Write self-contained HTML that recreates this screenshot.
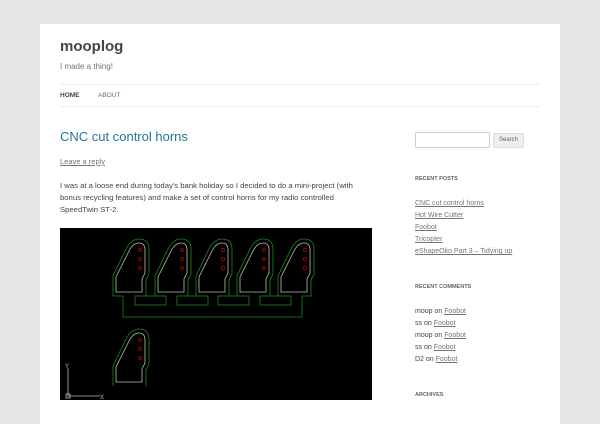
<!DOCTYPE html>
<html><head><style>
body{margin:0;background:#e6e6e6;font-family:"Liberation Sans","DejaVu Sans",sans-serif;width:600px;height:400px;overflow:hidden}
.page{position:absolute;left:40px;top:24px;width:520px;height:400px;background:#fff}
a{color:#757575;text-decoration:underline}
.s{position:absolute;white-space:nowrap}
</style></head><body>
<div class="page"></div>
<div class="s" style="left:60px;top:38px;font-size:15px;font-weight:bold;color:#444">mooplog</div>
<div class="s" style="left:60px;top:62px;font-size:8px;color:#757575">I made a thing!</div>
<div style="position:absolute;left:60px;top:84px;width:480px;border-top:1px solid #ededed"></div>
<div class="s" style="left:60px;top:92px;font-size:6.5px;font-weight:bold;color:#444">HOME</div>
<div class="s" style="left:98px;top:92px;font-size:6.5px;color:#6a6a6a">ABOUT</div>
<div style="position:absolute;left:60px;top:106px;width:480px;border-top:1px solid #ededed"></div>
<div class="s" style="left:60px;top:129px;font-size:13px;color:#21759b">CNC cut control horns</div>
<div class="s" style="left:60px;top:157px;font-size:7.5px"><a>Leave a reply</a></div>
<div class="s" style="left:60px;top:180px;font-size:7.7px;line-height:12px;color:#444">I was at a loose end during today's bank holiday so I decided to do a mini-project (with<br>bonus recycling features) and make a set of control horns for my radio controlled<br>SpeedTwin ST-2.</div>
<svg style="position:absolute;left:60px;top:228px" width="312" height="172" viewBox="0 0 312 172">
<rect width="312" height="172" fill="#000"/>
<defs>
<g id="h">
<path d="M0 49 L0 34 L13 8 Q17 0 23 0 Q29 0 29 7 L29 30 L26 36 L26 49 Z" fill="none" stroke="#bbb" stroke-width="0.8"/>
<path d="M-3 53 L-3 33 L10 6 Q15 -4 23 -4 Q33 -4 33 6 L33 31 L30 37 L30 53" fill="none" stroke="#1a8a1a" stroke-width="0.8"/>
<circle cx="24" cy="7" r="1.5" fill="none" stroke="#c00" stroke-width="0.8"/><circle cx="24" cy="16" r="1.5" fill="none" stroke="#c00" stroke-width="0.8"/><circle cx="24" cy="25" r="1.5" fill="none" stroke="#c00" stroke-width="0.8"/>
</g>
</defs>
<use href="#h" x="56" y="15"/><use href="#h" x="98" y="15"/><use href="#h" x="139" y="15"/><use href="#h" x="180" y="15"/><use href="#h" x="221" y="15"/>
<g fill="none" stroke="#1a8a1a" stroke-width="0.8">
<path d="M53 68 L63 68 L63 89 L242 89 L242 68 L252 68"/>
<rect x="75" y="68" width="31" height="9"/><rect x="117" y="68" width="31" height="9"/><rect x="158" y="68" width="31" height="9"/><rect x="200" y="68" width="31" height="9"/>
</g>
<use href="#h" x="56" y="105"/>
<g stroke="#bbb" stroke-width="0.8" fill="none"><path d="M8 140 L8 168 L40 168"/><rect x="6" y="166" width="4" height="4"/></g>
<text x="5" y="140" fill="#bbb" font-size="6">Y</text><text x="40" y="171" fill="#bbb" font-size="6">X</text>
</svg>
<div style="position:absolute;left:415px;top:132px;width:73px;height:14px;border:1px solid #ccc;border-radius:2px"></div>
<div class="s" style="left:493px;top:133px;width:29px;height:13px;background:#eee;border:1px solid #ddd;border-radius:2px;font-size:6px;color:#666;text-align:center;line-height:13px">Search</div>
<div class="s" style="left:415px;top:176px;font-size:5.5px;font-weight:bold;color:#636363">RECENT POSTS</div>
<div class="s" style="left:415px;top:198px;font-size:7px;line-height:12px;color:#757575"><a>CNC cut control horns</a><br><a>Hot Wire Cutter</a><br><a>Foobot</a><br><a>Tricopter</a><br><a>eShapeOko Part 3 – Tidying up</a></div>
<div class="s" style="left:415px;top:284px;font-size:5.5px;font-weight:bold;color:#636363">RECENT COMMENTS</div>
<div class="s" style="left:415px;top:306px;font-size:7px;line-height:12px;color:#444">moop on <a>Foobot</a><br>ss on <a>Foobot</a><br>moop on <a>Foobot</a><br>ss on <a>Foobot</a><br>D2 on <a>Foobot</a></div>
<div class="s" style="left:415px;top:392px;font-size:5.5px;font-weight:bold;color:#636363">ARCHIVES</div>
</body></html>
